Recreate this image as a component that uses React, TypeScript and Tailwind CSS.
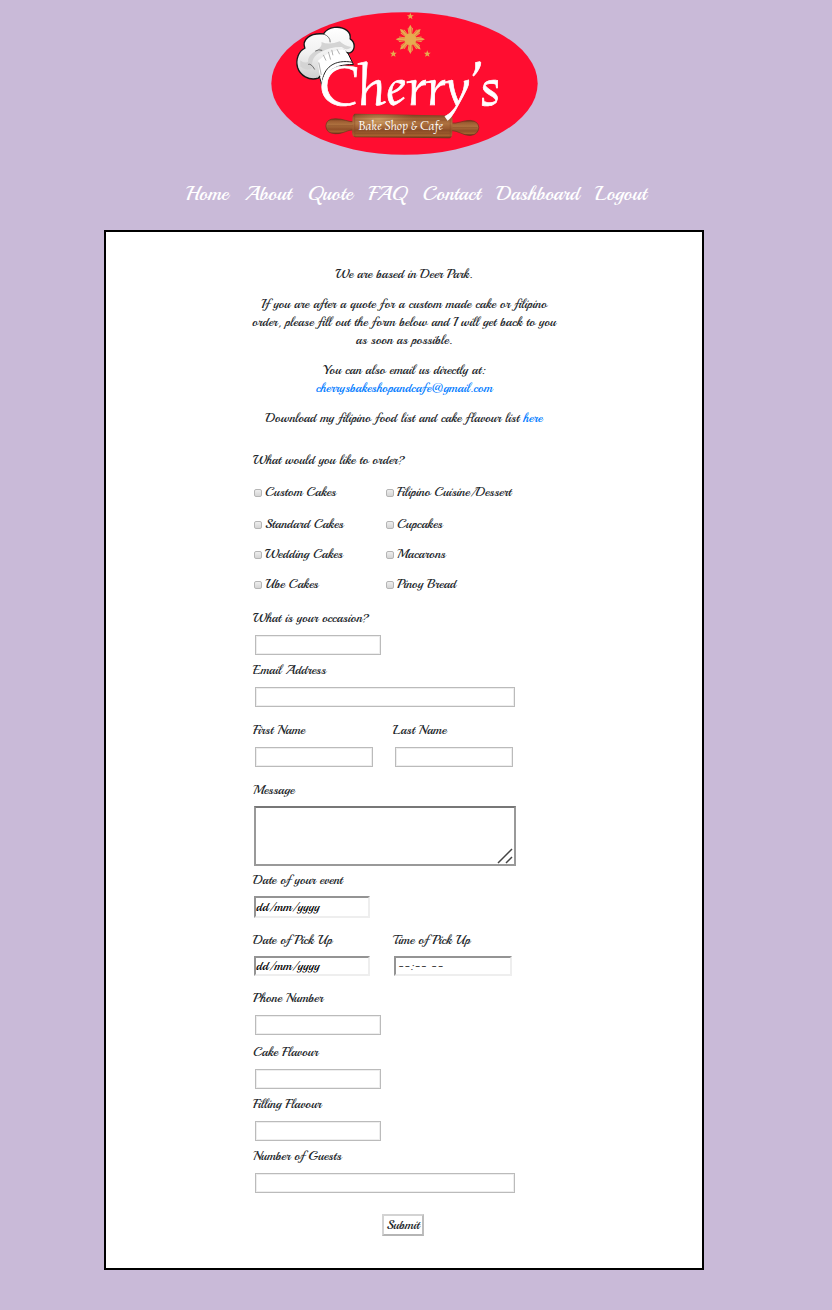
import type { ReactNode } from "react";

const navItems = ["Home", "About", "Quote", "FAQ", "Contact", "Dashboard", "Logout"];

const products = [
  [["Custom Cakes", "Filipino Cuisine/Dessert"]],
  [
    ["Standard Cakes", "Cupcakes"],
    ["Wedding Cakes", "Macarons"],
    ["Ube Cakes", "Pinoy Bread"],
  ],
];

const boxInput =
  "ml-[2px] block h-5 border border-[#bbbbbb] bg-white px-1 shadow-[inset_0_0_0_1px_#eeeeee] outline-none";
const insetInput =
  "ml-px block border-2 border-t-[#949494] border-l-[#949494] border-r-[#eeeeee] border-b-[#eeeeee] bg-white outline-none";

function Field({ id, label, className = "", children }: { id: string; label: string; className?: string; children: ReactNode }) {
  return (
    <div className={`flex flex-col items-start ${className}`}>
      <label htmlFor={id}>{label}</label>
      {children}
    </div>
  );
}

const starPoints = "0,-11 2.8,-3.6 10.5,-3.4 4.4,1.4 6.5,8.9 0,4.6 -6.5,8.9 -4.4,1.4 -10.5,-3.4 -2.8,-3.6";

function Logo() {
  return (
    <svg viewBox="33 36 801 430" className="h-[143px] w-[267px]" role="img" aria-label="Cherry's Bake Shop & Cafe">
      <defs>
        <linearGradient id="wood" x1="0" y1="0" x2="0" y2="1">
          <stop offset="0" stopColor="#6b351a" />
          <stop offset=".15" stopColor="#9c5c31" />
          <stop offset=".4" stopColor="#ad713f" />
          <stop offset=".7" stopColor="#8f4f28" />
          <stop offset=".88" stopColor="#a5622f" />
          <stop offset="1" stopColor="#5d2c13" />
        </linearGradient>
        <radialGradient id="shine" cx=".25" cy=".25" r=".4">
          <stop offset="0" stopColor="#d9ad70" stopOpacity=".9" />
          <stop offset="1" stopColor="#b27943" stopOpacity="0" />
        </radialGradient>
        <linearGradient id="puff" x1="0" y1="0" x2="0" y2="1">
          <stop offset="0" stopColor="#ffffff" />
          <stop offset=".5" stopColor="#f1f1f1" />
          <stop offset="1" stopColor="#cfcfcf" />
        </linearGradient>
      </defs>
      <ellipse cx="433.500" cy="251" rx="400.500" ry="214.500" fill="#ff0d30" />

      <g fill="#e5ad50">
        {[[451, 49], [400, 162], [502, 162]].map(([x, y]) => (
          <polygon key={x} points={starPoints} transform={`translate(${x} ${y})`} />
        ))}
        <g transform="translate(451 118)">
          <circle r="18" />
          {[0, 45, 90, 135, 180, 225, 270, 315].map((angle) => (
            <g key={angle} transform={`rotate(${angle})`}>
              <path d="M-3-14-4-36 0-44 4-36 3-14Z" />
              <path d="M-5-14-8-33-5-35-3-14ZM5-14 8-33 5-35 3-14Z" />
            </g>
          ))}
        </g>
      </g>

      <g strokeLinejoin="round" strokeLinecap="round">
        <path
          d="M172 184Q171 220 187 263C190 222 214 193 280 194L258 149Q213 139 172 184Z"
          fill="#fff"
          stroke="#171717"
          strokeWidth="3"
        />
        <path
          d="M174 235C146 244 119 226 112 203C105 178 116 153 134 145C124 119 149 98 190 102C204 80 239 75 261 92C269 98 271 109 270 117C286 127 286 150 271 158C263 161 257 159 252 151Z"
          fill="url(#puff)"
          stroke="#171717"
          strokeWidth="4"
        />
        <path d="M120 200Q143 218 157 203Q150 171 183 156Q211 140 245 141Q260 155 274 141Q252 138 239 124Q206 136 184 126Q187 142 166 153Q143 166 143 186Q131 191 120 181Z" fill="#d4d4d4" />
        <path d="M174 182Q207 151 254 148L274 188Q212 183 187 247Q174 222 174 182Z" fill="#fff" />
        <path d="M190 102Q211 110 210 126M145 193Q153 190 163 208M166 153Q176 147 185 151" fill="none" stroke="#333" strokeWidth="2" />
        <path d="M190 166 197 181M205 157 211 178M215 151 218 165M231 149 238 162M176 189 183 224" fill="none" stroke="#888" strokeWidth="2" />
        <path d="M186 250C188 203 223 177 277 187" fill="none" stroke="#292929" strokeWidth="3" />
      </g>

      <path d="M285 366C262 368 251 356 225 357Q198 357 197 379Q198 401 225 402C251 403 262 388 285 391Z" fill="url(#wood)" stroke="#68371d" strokeWidth="2" />
      <path d="M572 370C594 373 609 361 632 362Q656 364 657 384Q655 405 632 407C609 408 597 393 572 392Z" fill="url(#wood)" stroke="#68371d" strokeWidth="2" />
      <path d="M284 342 571 347Q579 351 578 358L577 405Q576 414 569 416L285 413Q276 408 276 401L277 353Q278 346 284 342Z" fill="url(#wood)" />
      <path d="M284 342 571 347 569 416 285 413Z" fill="url(#shine)" />
      <path d="M285 352H571M285 361H571M285 391H571M285 402H570M284 343V412M571 348V415M202 378H279M578 383H653" stroke="#713a1c" strokeWidth="2" opacity=".4" />

      <text x="177" y="316" fill="#fff" stroke="#fff" strokeWidth="2" fontSize="170" className="font-['Simonetta','Liberation_Serif',serif] italic">Cherry’s</text>
      <text x="295" y="390" fill="#fff" fontSize="38" className="font-['Simonetta','Liberation_Serif',serif] italic">Bake Shop &amp; Cafe</text>
    </svg>
  );
}

export default function App() {
  return (
    <div className="min-h-screen bg-[#c9bad8] pt-3 pb-10 font-['Playball','Liberation_Serif',serif] text-[13px] leading-[18px] text-[#212529]">
      <header className="flex flex-col items-center">
        <div className="pr-6">
          <Logo />
        </div>
        <nav className="mt-6 flex flex-wrap justify-center gap-x-4 text-xl leading-[30px] text-white">
          {navItems.map((item) => (
            <a key={item} href="#">{item}</a>
          ))}
        </nav>
      </header>

      <div className="mt-[21px] flex justify-center pr-6">
        <main className="flex w-[600px] max-w-full flex-col items-center border-2 border-black bg-white pt-[33px] pb-8">
          <section className="flex w-[312px] flex-col gap-3 text-center">
            <p>We are based in Deer Park.</p>
            <p>
              If you are after a quote for a custom made cake or filipino order, please fill out the form below and I will get back to you as soon as possible.
            </p>
            <p>
              You can also email us directly at:
              <br />
              <a href="mailto:cherrysbakeshopandcafe@gmail.com" className="text-[#007bff]">cherrysbakeshopandcafe@gmail.com</a>
            </p>
            <p>
              Download my filipino food list and cake flavour list <a href="#" className="text-[#007bff]">here</a>
            </p>
          </section>

          <form className="mt-6 w-[302px]" onSubmit={(event) => event.preventDefault()}>
            <fieldset>
              <legend>What would you like to order?</legend>
              <div className="mt-[14px] flex flex-col gap-[14px]">
                {products.map((rows) => (
                  <div key={rows[0][0]} className="grid grid-cols-[132px_1fr] gap-y-3">
                    {rows.flat().map((name) => (
                      <label key={name} className="flex items-center gap-[3px] pl-px whitespace-nowrap">
                        <input
                          type="checkbox"
                          className="mt-[2px] size-2 appearance-none rounded-[2px] border border-[#b5b5b5] bg-linear-to-b from-[#eeeeee] to-[#d5d5d5] checked:from-[#666666] checked:to-[#444444]"
                        />
                        {name}
                      </label>
                    ))}
                  </div>
                ))}
              </div>
            </fieldset>

            <Field id="occasion" label="What is your occasion?" className="mt-4 gap-2">
              <input id="occasion" className={`${boxInput} w-[126px]`} />
            </Field>
            <Field id="email" label="Email Address" className="mt-[6px] gap-2">
              <input id="email" type="email" className={`${boxInput} w-[260px]`} />
            </Field>
            <div className="mt-[14px] grid grid-cols-[140px_1fr]">
              <Field id="first" label="First Name" className="gap-2">
                <input id="first" className={`${boxInput} w-[118px]`} />
              </Field>
              <Field id="last" label="Last Name" className="gap-2">
                <input id="last" className={`${boxInput} w-[118px]`} />
              </Field>
            </div>
            <Field id="message" label="Message" className="mt-[14px] gap-[7px]">
              <div className="relative ml-px">
                <textarea id="message" className="block h-[60px] w-[262px] resize-none border-2 border-[#999999] border-t-[#777777] bg-white px-1 outline-none" />
                <svg viewBox="0 0 16 16" className="pointer-events-none absolute right-[3px] bottom-[2px] size-4" fill="none" stroke="#444" strokeWidth="1.500" aria-hidden="true">
                  <path d="M1 15 15 1M9 15l6-6" />
                </svg>
              </div>
            </Field>
            <Field id="event-date" label="Date of your event" className="mt-[5px] gap-[7px]">
              <input id="event-date" placeholder="dd/mm/yyyy" className={`${insetInput} h-[22px] w-[116px] placeholder:text-black`} />
            </Field>
            <div className="mt-[13px] grid grid-cols-[140px_1fr]">
              <Field id="pickup-date" label="Date of Pick Up" className="gap-[7px]">
                <input id="pickup-date" placeholder="dd/mm/yyyy" className={`${insetInput} h-5 w-[116px] placeholder:text-black`} />
              </Field>
              <Field id="pickup-time" label="Time of Pick Up" className="gap-[7px]">
                <input id="pickup-time" placeholder="--:-- --" className={`${insetInput} h-5 w-[118px] px-px placeholder:text-[#444444]`} />
              </Field>
            </div>
            <Field id="phone" label="Phone Number" className="mt-[13px] gap-2">
              <input id="phone" type="tel" className={`${boxInput} w-[126px]`} />
            </Field>
            <Field id="cake" label="Cake Flavour" className="mt-2 gap-2">
              <input id="cake" className={`${boxInput} w-[126px]`} />
            </Field>
            <Field id="filling" label="Filling Flavour" className="mt-[6px] gap-2">
              <input id="filling" className={`${boxInput} w-[126px]`} />
            </Field>
            <Field id="guests" label="Number of Guests" className="mt-[6px] gap-2">
              <input id="guests" className={`${boxInput} w-[260px]`} />
            </Field>
            <div className="mt-[21px] flex justify-center pr-[2px]">
              <button type="submit" className="h-[22px] w-[42px] border-2 border-[#d3d3d3] border-r-[#bdbdbd] border-b-[#b5b5b5] bg-white leading-4">
                Submit
              </button>
            </div>
          </form>
        </main>
      </div>
    </div>
  );
}
